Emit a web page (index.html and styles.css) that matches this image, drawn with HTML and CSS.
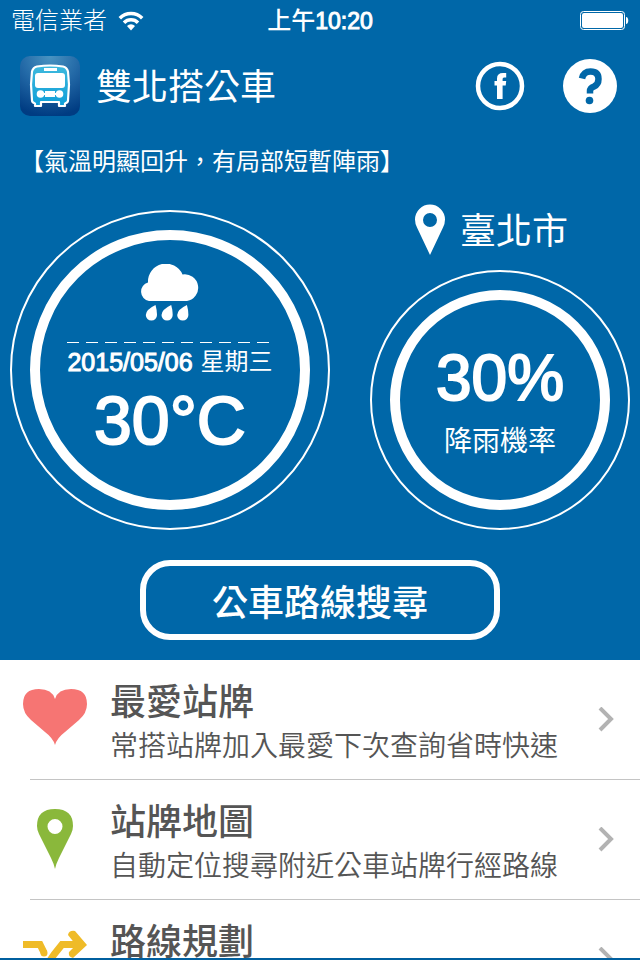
FILE: index.html
```html
<!DOCTYPE html>
<html lang="zh-Hant">
<head>
<meta charset="utf-8">
<meta name="viewport" content="width=device-width, initial-scale=1">
<title>雙北搭公車</title>
<link rel="stylesheet" href="styles.css">
</head>
<body>
<div class="status">
  <div class="carrier">
    <span>電信業者</span>
    <svg width="26" height="20" viewBox="0 0 26 20" aria-hidden="true">
      <g fill="none" stroke="#fff" stroke-width="3.500">
        <path d="M1.800 7.300a15.600 15.600 0 0 1 22.400 0"/>
        <path d="M6 11.800a9.800 9.800 0 0 1 14 0"/>
      </g>
      <path d="M13 19.500l-4-4.500a5.700 5.700 0 0 1 8 0z" fill="#fff"/>
    </svg>
  </div>
  <time class="clock">上午<span class="hour">10:20</span></time>
  <div class="power">
    <svg width="50" height="20" viewBox="0 0 50 20" aria-hidden="true">
      <rect x="1.500" y=".5" width="44" height="18" rx="3" fill="none" stroke="#fff"/>
      <rect x="3" y="2" width="41" height="15" rx="2" fill="#fff"/>
      <path d="M47 6c3 0 3 7 0 7z" fill="#fff"/>
    </svg>
  </div>
</div>

<header class="topbar">
  <svg width="60" height="60" viewBox="0 0 60 60" aria-hidden="true">
    <defs>
      <radialGradient id="tile" cx=".5" cy="0" r="1">
        <stop offset="0" stop-color="#4a94c2"/>
        <stop offset=".5" stop-color="#2268a6"/>
        <stop offset="1" stop-color="#003c82"/>
      </radialGradient>
      <linearGradient id="bus" x2="0" y2="1">
        <stop offset="0" stop-color="#3fb9dd"/>
        <stop offset="1" stop-color="#0f9ed8"/>
      </linearGradient>
    </defs>
    <rect width="60" height="60" rx="10" fill="url(#tile)"/>
    <path d="M17 10.500q13-2 26 0 4 1 5 5l1 13-1 16q0 2-3 3v2.500h-6V46H21v4h-6v-2.500q-3-1-3-3l-1-16 1-13q1-4 5-5z" fill="url(#bus)" stroke="#fff" stroke-width="2.200" stroke-linejoin="round"/>
    <g fill="#fff">
      <rect x="24" y="12" width="13" height="3"/>
      <rect x="15" y="17" width="30" height="15" rx="3"/>
      <circle cx="20.500" cy="38" r="3.800"/>
      <circle cx="39.500" cy="38" r="3.800"/>
      <path d="M25 35h10v6H25zM22 37h16v2H22z"/>
    </g>
  </svg>
  <h1 class="title">雙北搭公車</h1>
  <button class="round" aria-label="Facebook">
    <svg width="50" height="50" viewBox="0 0 50 50" aria-hidden="true">
      <circle cx="25" cy="25" r="22" fill="none" stroke="#fff" stroke-width="4.500"/>
      <path d="M22 38V24.500h-2.500V20H22v-2.500q0-5.500 6-5.500h3.200V16.500H29q-1.400 0-1.400 1.500v2h3.600l-.5 4.500h-3.100V38z" fill="#fff"/>
    </svg>
  </button>
  <button class="round" aria-label="說明">
    <svg width="56" height="56" viewBox="0 0 56 56" aria-hidden="true">
      <circle cx="28" cy="28" r="27" fill="#fff"/>
      <path d="M20 20.500q1.500-7 8.500-7 8 0 8 7.500 0 5.500-4.500 7.500-4 1.500-4 4.500v2.500" fill="none" stroke="#0067a8" stroke-width="6.500"/>
      <circle cx="27.500" cy="42.500" r="3.800" fill="#0067a8"/>
    </svg>
  </button>
</header>

<main class="main">
  <p class="notice">【氣溫明顯回升，有局部短暫陣雨】</p>

  <section class="weather">
    <div class="ring ring-large">
      <div class="dial">
        <svg width="64" height="58" viewBox="0 0 64 58" aria-hidden="true">
          <g fill="#fff">
            <path d="M11 37a9.500 9.500 0 0 1-1-18.500A18 18 0 0 1 44.500 10.500 13.200 13.200 0 1 1 49 37z"/>
            <path d="M17.500 41q1.500 5 1.500 10a5.600 5.600 0 0 1-11.200 0Q8 45.500 17.500 41z"/>
            <path d="M33.200 41q1.500 5 1.500 10a5.600 5.600 0 0 1-11.200 0q.2-5.500 9.700-10z"/>
            <path d="M48.900 41q1.500 5 1.500 10a5.600 5.600 0 0 1-11.200 0q.2-5.500 9.700-10z"/>
          </g>
        </svg>
        <div class="date"><span class="digits">2015/05/06</span><span>星期三</span></div>
        <div class="temp">30°C</div>
      </div>
    </div>
    <div class="side">
      <a class="city" href="#">
        <svg width="32" height="52" viewBox="0 0 32 52" aria-hidden="true">
          <path fill="#fff" fill-rule="evenodd" d="M16 51L3 23.500Q1 19.500 1 15.500a15 15 0 0 1 30 0q0 4-2 8zM16 9a7 7 0 1 0 0 14 7 7 0 1 0 0-14z"/>
        </svg>
        <span>臺北市</span>
      </a>
      <div class="ring ring-small">
        <div class="dial">
          <div class="rain">30%</div>
          <div class="label">降雨機率</div>
        </div>
      </div>
    </div>
  </section>

  <button class="search">公車路線搜尋</button>
</main>

<ul class="menu">
  <li><a class="row" href="#">
    <svg width="64" height="64" viewBox="0 2 64 64" aria-hidden="true">
      <path fill="#f67573" d="M32 59q-2-7-10-13L8 34Q0 27 0 18 0 3 16 3q13 0 16 10Q35 3 48 3q16 0 16 15 0 9-8 16L42 46q-8 6-10 13z"/>
    </svg>
    <span class="text"><strong>最愛站牌</strong><span>常搭站牌加入最愛下次查詢省時快速</span></span>
    <svg class="chevron" width="16" height="26" viewBox="0 0 16 26" aria-hidden="true"><path d="M2 1l11 11L2 23"/></svg>
  </a></li>
  <li><a class="row" href="#">
    <svg width="64" height="64" viewBox="0 2 64 64" aria-hidden="true">
      <path fill="#8ab83b" fill-rule="evenodd" d="M32 63q-1-5-4-11L16 28q-2-4-2-8Q14 3 32 3t18 17q0 4-2 8L36 52q-3 6-4 11zM32 13a7.500 7.500 0 1 0 0 15 7.500 7.500 0 1 0 0-15z"/>
    </svg>
    <span class="text"><strong>站牌地圖</strong><span>自動定位搜尋附近公車站牌行經路線</span></span>
    <svg class="chevron" width="16" height="26" viewBox="0 0 16 26" aria-hidden="true"><path d="M2 1l11 11L2 23"/></svg>
  </a></li>
  <li><a class="row" href="#">
    <svg width="64" height="64" viewBox="0 2 64 64" aria-hidden="true">
      <path fill="none" stroke="#efbb28" stroke-width="7" d="M0 18.500h17l4 8M0 48.500h14q5 0 9-8l8-12 8-10h14M39 39q3 9 8 9h8"/>
      <path fill="#efbb28" d="M45 9q1-5 7-4l12 14-14 13q-5-1-4-6l7-7zM45 39q1-5 7-4l12 14-14 13q-5-1-4-6l7-7z"/>
      <circle cx="21" cy="27" r="3.500" fill="#efbb28"/>
    </svg>
    <span class="text"><strong>路線規劃</strong></span>
    <svg class="chevron" width="16" height="26" viewBox="0 0 16 26" aria-hidden="true"><path d="M2 1l11 11L2 23"/></svg>
  </a></li>
</ul>
<div class="bottom"></div>
</body>
</html>
```
FILE: styles.css
```css
* {
  box-sizing: border-box;
}

body {
  margin: 0;
  height: 100vh;
  display: flex;
  flex-direction: column;
  overflow: hidden;
  background: #0067a8;
  color: #fff;
  font-family: "Liberation Sans", "Noto Sans CJK TC", sans-serif;
}

button {
  padding: 0;
  border: 0;
  background: none;
  color: inherit;
  font: inherit;
}

a {
  color: inherit;
  text-decoration: none;
}

svg {
  display: block;
  flex: none;
}

.status {
  display: grid;
  grid-template-columns: 1fr auto 1fr;
  align-items: center;
  height: 40px;
  padding: 2px 11px 0;
  font-size: 24px;
  line-height: 38px;
}

.carrier {
  display: flex;
  align-items: center;
  gap: 11px;
  font-weight: 300;
}

.clock {
  font-weight: 500;
}

.hour {
  font-size: 23px;
  -webkit-text-stroke: 1px #fff;
}

.power {
  display: flex;
  justify-content: flex-end;
}

.topbar {
  display: flex;
  align-items: center;
  height: 92px;
  padding: 0 22px 0 20px;
}

.title {
  flex: 1;
  margin: 0 0 0 16px;
  padding-top: 4px;
  font-size: 36px;
  font-weight: 400;
  line-height: 44px;
}

.round + .round {
  margin-left: 37px;
}

.main {
  display: flex;
  flex-direction: column;
  padding: 0 10px 20px;
}

.notice {
  margin: 8px 0 20px 10px;
  font-size: 24px;
  line-height: 44px;
}

.weather {
  display: flex;
  justify-content: space-between;
  align-items: flex-end;
}

.ring {
  padding: 18px;
  border: 2px solid #fff;
  border-radius: 50%;
}

.ring-large {
  width: 320px;
  height: 320px;
}

.ring-small {
  width: 260px;
  height: 260px;
}

.dial {
  display: flex;
  flex-direction: column;
  align-items: center;
  height: 100%;
  border: 10px solid #fff;
  border-radius: 50%;
}

.ring-large .dial {
  padding-top: 24px;
}

.ring-small .dial {
  padding-top: 40px;
}

.date {
  display: flex;
  gap: 8px;
  margin-top: 20px;
  background: repeating-linear-gradient(to right, #fff 0 12px, transparent 12px 19px) top / 100% 1px no-repeat;
  font-size: 24px;
  line-height: 40px;
}

.digits {
  font-size: 25px;
  -webkit-text-stroke: 1px #fff;
}

.temp {
  font-size: 68px;
  line-height: 76px;
  -webkit-text-stroke: 2px #fff;
}

.rain {
  font-size: 64px;
  line-height: 76px;
  -webkit-text-stroke: 2px #fff;
}

.label {
  margin-top: 4px;
  font-size: 28px;
  line-height: 44px;
}

.side {
  display: flex;
  flex-direction: column;
  align-items: center;
  gap: 14px;
}

.city {
  display: flex;
  align-items: center;
  gap: 14px;
  height: 52px;
  margin-right: 18px;
  font-size: 36px;
  line-height: 52px;
}

.city span {
  padding-top: 4px;
}

.search {
  align-self: center;
  width: 360px;
  height: 80px;
  margin-top: 30px;
  border: 6px solid #fff;
  border-radius: 30px;
  font-size: 36px;
  font-weight: 500;
}

.menu {
  flex: 1;
  min-height: 0;
  margin: 0;
  padding: 0;
  overflow: hidden;
  list-style: none;
  background: #fff;
  color: #555;
}

.row {
  display: flex;
  align-items: center;
  height: 120px;
  padding: 0 26px 0 23px;
  background: linear-gradient(#c4c4c4, #c4c4c4) 30px 100% / 100% 1px no-repeat;
}

.text {
  flex: 1;
  align-self: flex-start;
  display: flex;
  flex-direction: column;
  margin: 21px 0 0 23px;
  font-size: 28px;
  font-weight: 350;
  line-height: 44px;
}

.text strong {
  font-size: 36px;
  font-weight: 500;
}

.chevron {
  fill: none;
  stroke: #b3b3b3;
  stroke-width: 4px;
}

.bottom {
  height: 2px;
  background: #005f9f;
}
```
